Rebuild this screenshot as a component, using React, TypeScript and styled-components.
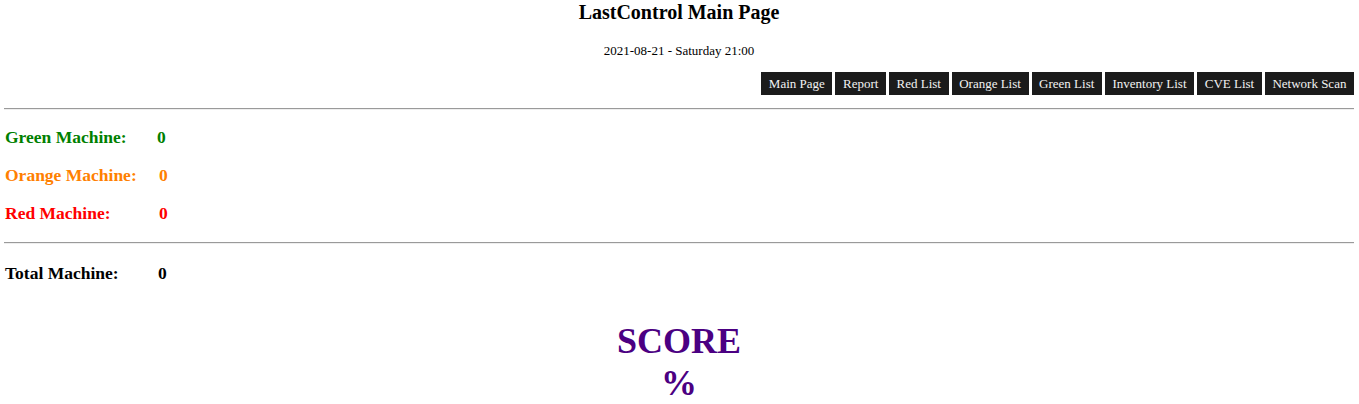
import React from "react";
import styled, { createGlobalStyle } from "styled-components";

const Global = createGlobalStyle`
  html, body { margin: 0; padding: 0; background: #ffffff; }
  body { font-family: "Liberation Serif", "Times New Roman", serif; color: #000; }
`;

const Page = styled.div`
  padding: 0 5px 0 4px;
  display: flex;
  flex-direction: column;
`;

const Title = styled.h1`
  margin: 0;
  font-size: 20px;
  line-height: 24px;
  font-weight: bold;
  text-align: center;
`;

const DateLine = styled.div`
  margin-top: 19px;
  font-size: 13px;
  line-height: 16px;
  text-align: center;
`;

const Nav = styled.nav`
  margin-top: 13px;
  display: flex;
  justify-content: flex-end;
  gap: 3px;
`;

const NavButton = styled.a`
  display: flex;
  align-items: center;
  height: 23px;
  padding: 0 7.6px;
  background: #1b1b1b;
  color: #f2f2f2;
  font-size: 13px;
  text-decoration: none;
  white-space: nowrap;
`;

const Rule = styled.div<{ $top: number }>`
  margin-top: ${(p) => p.$top}px;
  height: 0;
  border-top: 1px solid #9a9a9a;
  border-bottom: 1px solid #eeeeee;
`;

const Stats = styled.div<{ $top: number }>`
  margin-top: ${(p) => p.$top}px;
  display: flex;
  flex-direction: column;
`;

const StatRow = styled.div<{ $color: string; $valueX: number }>`
  display: grid;
  grid-template-columns: ${(p) => p.$valueX - 5}px auto;
  align-items: center;
  height: 38px;
  padding-left: 1px;
  color: ${(p) => p.$color};
  font-size: 17.5px;
  font-weight: bold;
`;

const Score = styled.div`
  margin-top: 28px;
  color: #4b0082;
  font-size: 36px;
  line-height: 42px;
  font-weight: bold;
  text-align: center;
`;

const navItems = [
  "Main Page",
  "Report",
  "Red List",
  "Orange List",
  "Green List",
  "Inventory List",
  "CVE List",
  "Network Scan",
];

const counts = [
  { label: "Green Machine:", color: "#008000", value: 0, x: 157 },
  { label: "Orange Machine:", color: "#ff8000", value: 0, x: 159 },
  { label: "Red Machine:", color: "#ff0000", value: 0, x: 159 },
];

export default function App() {
  return (
    <>
      <Global />
      <Page>
        <Title>LastControl Main Page</Title>
        <DateLine>2021-08-21 - Saturday 21:00</DateLine>
        <Nav>
          {navItems.map((n) => (
            <NavButton key={n} href="#">
              {n}
            </NavButton>
          ))}
        </Nav>
        <Rule $top={13} />
        <Stats $top={8}>
          {counts.map((c) => (
            <StatRow key={c.label} $color={c.color} $valueX={c.x}>
              <span>{c.label}</span>
              <span>{c.value}</span>
            </StatRow>
          ))}
        </Stats>
        <Rule $top={10} />
        <Stats $top={10}>
          <StatRow $color="#000000" $valueX={158}>
            <span>Total Machine:</span>
            <span>0</span>
          </StatRow>
        </Stats>
        <Score>
          <div>SCORE</div>
          <div>%</div>
        </Score>
      </Page>
    </>
  );
}
